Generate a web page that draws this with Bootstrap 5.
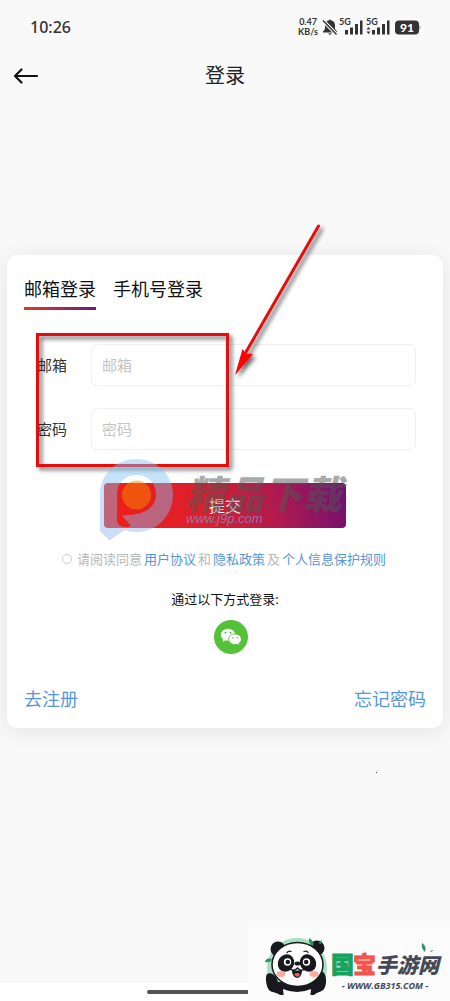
<!DOCTYPE html>
<html lang="zh-CN">
<head>
<meta charset="utf-8">
<meta name="viewport" content="width=device-width, initial-scale=1">
<title>登录</title>
<link rel="stylesheet" href="https://cdn.jsdelivr.net/npm/bootstrap@5.3.0/dist/css/bootstrap.min.css">
<script src="https://cdn.jsdelivr.net/npm/bootstrap@5.3.0/dist/js/bootstrap.bundle.min.js"></script>
<style>
  body { background: #f9f9f9; color: #111; font-family: "Noto Sans", "Noto Sans CJK SC", sans-serif; overflow-x: hidden; }
  a { color: #5596dc; text-decoration: none; }
  .status { height: 54px; padding: 0 27px 0 30px; color: #333; font-family: Lato, sans-serif; font-weight: 700; }
  .clock { font-family: "Noto Sans", sans-serif; font-size: 16px; font-weight: 500; }
  .rate { font-size: 9px; line-height: 10px; margin-right: 3px; }
  .topbar { height: 44px; }
  .topbar h1 { font-size: 20px; line-height: 28px; font-weight: 400; color: #222; }
  .back { left: 12px; width: 28px; height: 28px; }
  .panel { margin: 157px 7px 0; padding: 20px 17px 15px; border: 0; border-radius: 10px; box-shadow: 0 3px 24px rgba(0,0,0,.09); color: #111; }
  .tabs { gap: 17px; }
  .tabs button { background: none; border: 0; padding: 0 0 7px; font-size: 18px; line-height: 28px; color: #111; }
  .tabs .current { background: linear-gradient(90deg, #dd3a2a, #75186f) bottom / 100% 3px no-repeat; }
  .fields { margin-top: 34px; padding: 0 10px 0 13px; }
  .entry { margin-bottom: 22px; }
  .entry label { width: 54px; font-size: 15px; line-height: 24px; color: #333; }
  .entry .form-control { height: 42px; border-color: #f0f0f0; border-radius: 6px; font-size: 15px; padding: 0 10px; }
  .entry .form-control::placeholder { color: #c4c4c4; }
  .send { width: 242px; height: 45px; margin-top: 11px; padding: 0; border: 0; border-radius: 4px; font-size: 16px; color: #fff; background: linear-gradient(75deg, #f01f16, #dc1f2c 40%, #b01a50 70%, #6e0f72); }
  .agree { margin-top: 21px; font-size: 13px; line-height: 20px; color: #b8b8b8; }
  .agree a { margin: 0 2px; }
  .agree input { appearance: none; width: 10px; height: 10px; margin: 0 5px 0 0; border: 1px solid #cfcfcf; border-radius: 50%; background: #fff; }
  .agree input:checked { background: #5596dc; }
  .other { margin-top: 20px; font-size: 13px; line-height: 20px; }
  .providers { margin-top: 11px; padding-left: 12px; }
  .wechat { width: 34px; height: 34px; }
  .ends { margin-top: 31px; font-size: 18px; line-height: 28px; }
  .overlay { position: absolute; pointer-events: none; overflow: visible; left: 0; top: 0; }
  .speck { width: 1px; height: 1px; margin: 44px 73px 0 auto; background: #333; }
  .homebar { height: 18px; background: #fff; }
  .pill { width: 156px; height: 4px; border-radius: 2px; background: #555; }
  .brand { right: 0; bottom: 0; width: 202px; height: 74px; background: #fbfbfb; }
</style>
</head>
<body>
<div class="d-flex flex-column min-vh-100">
  <header>
    <div class="status d-flex align-items-center justify-content-between">
      <span class="clock">10:26</span>
      <div class="d-flex align-items-center">
        <div class="rate text-center">0.47<br>KB/s</div>
        <svg width="102" height="20" viewBox="0 0 102 20" fill="#333" aria-hidden="true">
          <path d="M8 3.200q1-1.600 2 0c3 .7 4 2.800 4 5.300v3.500l2 2.500v1H2v-1l2-2.500V8.500c0-2.500 1-4.600 4-5.300zM7 16.500h4q-2 2.500-4 0z"/>
          <path d="M2 3.500 15.500 17.500" stroke="#f9f9f9" stroke-width="3.500"/><path d="M2 3.500 15.500 17.500" stroke="#333" stroke-width="1.400"/>
          <text x="18" y="8" font-size="9" font-family="Lato">5G</text>
          <path d="M24 13h3v4.500h-3zM29 10.500h3v7h-3zM34 7h3v10.500h-3zM39 3.500h2.500v14H39z"/>
          <text x="45" y="8" font-size="9" font-family="Lato">5G</text>
          <path d="M45.500 12.500 47.500 10l2 2.500zM45.500 14.500h4L47.500 17zM51 13h3v4.500h-3zM56 10.500h3v7h-3zM61 7h3v10.500h-3zM66 3.500h2.500v14H66z"/>
          <rect x="74" y="3.500" width="24" height="14" rx="4"/><path d="M98.500 8q2 2.500 0 5z" fill="#888"/>
          <text x="86" y="14.500" font-size="12" font-weight="900" text-anchor="middle" fill="#fff" font-family="Lato">91</text>
        </svg>
      </div>
    </div>
    <div class="topbar position-relative d-flex align-items-center justify-content-center">
      <button class="back btn p-0 border-0 position-absolute d-flex" type="button" aria-label="返回">
        <svg width="28" height="28" viewBox="0 0 28 28" fill="none" stroke="#111" stroke-width="2.200" stroke-linecap="round" stroke-linejoin="round"><path d="M25 14H3M9.500 7.500 3 14l6.500 6.500"/></svg>
      </button>
      <h1 class="m-0">登录</h1>
    </div>
  </header>

  <main class="panel card position-relative">
    <div class="tabs d-flex">
      <button class="current" type="button">邮箱登录</button>
      <button type="button">手机号登录</button>
    </div>
    <form class="d-flex flex-column">
      <div class="fields">
        <div class="entry d-flex align-items-center">
          <label for="mail" class="flex-shrink-0">邮箱</label>
          <input id="mail" type="email" class="form-control" placeholder="邮箱">
        </div>
        <div class="entry d-flex align-items-center">
          <label for="pass" class="flex-shrink-0">密码</label>
          <input id="pass" type="password" class="form-control" placeholder="密码">
        </div>
      </div>
      <button type="submit" class="send btn align-self-center">提交</button>
      <div class="agree d-flex align-items-center justify-content-center">
        <input id="agree" type="checkbox"><label for="agree">请阅读同意</label><a href="#">用户协议</a>和<a href="#">隐私政策</a>及<a href="#">个人信息保护规则</a>
      </div>
    </form>
    <div class="other text-center">通过以下方式登录:</div>
    <div class="providers d-flex justify-content-center">
      <button type="button" class="wechat btn p-0 border-0 rounded-circle d-flex" aria-label="微信登录">
        <svg width="34" height="34" viewBox="0 0 34 34">
          <circle cx="17" cy="17" r="17" fill="#56c138"/>
          <path fill="#fff" d="M9 18l-.3 4 3-2z"/>
          <ellipse cx="14" cy="14.700" rx="7.200" ry="6" fill="#fff"/>
          <path fill="#fff" stroke="#56c138" stroke-width=".9" d="M21 13.900c-3.500 0-6.300 2.400-6.300 5.300s2.800 5.300 6.300 5.300c.8 0 1.500-.1 2.200-.3l2.300 1.300-.6-2.100c1.500-1 2.400-2.500 2.400-4.200 0-2.900-2.800-5.300-6.300-5.300z"/>
          <g fill="#56c138"><circle cx="11.500" cy="12.800" r="1"/><circle cx="16.500" cy="12.800" r="1"/><circle cx="19" cy="17.700" r=".8"/><circle cx="23.200" cy="17.700" r=".8"/></g>
        </svg>
      </button>
    </div>
    <div class="ends d-flex justify-content-between"><a href="#">去注册</a><a href="#">忘记密码</a></div>

    <svg class="overlay" width="436" height="473" viewBox="7 255 436 473" aria-hidden="true">
      <defs>
        <linearGradient id="drop" x1="0" y1="0" x2="0" y2="1"><stop offset="0" stop-color="#7cc4f2"/><stop offset="1" stop-color="#8db4f2"/></linearGradient>
        <filter id="shade" x="-20%" y="-20%" width="150%" height="150%"><feDropShadow dx="3" dy="3" stdDeviation="2" flood-color="#000" flood-opacity=".6"/></filter>
      </defs>
      <g fill="none" stroke="#e60f10" stroke-width="3" filter="url(#shade)">
        <rect x="37.500" y="334.500" width="190" height="131"/>
        <path d="M318.500 226 246 352" stroke-linecap="round"/>
        <path d="M235 375 242.500 349 246 353.500 253 354z" fill="#f00" stroke="none"/>
      </g>
      <path fill="url(#drop)" fill-opacity=".45" fill-rule="evenodd" d="M100 495C100 474 116 459 136.500 459S173 475 173 495s-16 37-36.500 37c-5 0-9-1-12-2l-15 10.500L100 531zM136.500 475C125 475 117 483 117 494v28c1 4 9 7 14 4l-9-10.500c22-.5 34-7 34-21.500 0-11-8-19-19.500-19z"/>
      <circle cx="136.500" cy="495" r="14.500" fill="#f58a00" fill-opacity=".5"/>
      <g fill="#555" fill-opacity=".5" font-style="italic">
        <text x="186" y="509" font-size="39" font-weight="900" font-family="Noto Sans CJK SC">精品下载</text>
        <text x="186" y="523" font-size="13" fill="#7f8fc4" fill-opacity=".8" font-family="Liberation Sans">www.j9p.com</text>
      </g>
    </svg>
  </main>
  <div class="speck"></div>

  <footer class="homebar mt-auto position-relative d-flex align-items-center justify-content-center">
    <div class="pill"></div>
    <div class="brand position-absolute">
      <svg width="202" height="74" viewBox="248 927 202 74" role="img" aria-label="国宝手游网">
        <circle cx="297" cy="968" r="30" fill="#a9dfc3"/>
        <path fill="#17191e" d="M267 974c-2 3-1 12 2 16 3 3 8 2 11 5h34c3-3 8-3 10-6 3-4 3-14-1-17-4-2-8 3-9 8l-36 2c-1-5-6-11-11-8z"/>
        <path fill="#fbfbfb" d="M283 989q14 6 28 0l-1 10h-26z"/>
        <g fill="#17191e"><circle cx="278" cy="949" r="7.500"/><circle cx="317" cy="948" r="7.500"/></g>
        <ellipse cx="297.500" cy="964.500" rx="25.500" ry="22" fill="#fff" stroke="#17191e" stroke-width="1.500"/>
        <g fill="#17191e"><ellipse cx="286" cy="963" rx="8" ry="9" transform="rotate(30 286 963)"/><ellipse cx="308" cy="963" rx="8" ry="9" transform="rotate(-30 308 963)"/><ellipse cx="297.500" cy="963.500" rx="3" ry="2"/></g>
        <g fill="#fff"><circle cx="287.500" cy="962" r="3.700"/><circle cx="306.500" cy="962" r="3.700"/></g>
        <g fill="#17191e"><circle cx="287.800" cy="962" r="2.300"/><circle cx="306.200" cy="962" r="2.300"/></g>
        <path d="M287 952.500q2-2 4-1M304 951.500q3-1 4 1M290 969q4 3 7.500-1 3 4 7.500 1" fill="none" stroke="#17191e" stroke-width="1.300" stroke-linecap="round"/>
        <path d="M292 970q5 1 10 0c0 11-10 10-10 0z" fill="#17191e"/><path d="M294 974q3-2 6 0-2 6-6 0z" fill="#f06455"/>
        <g fill="#ffa99d"><ellipse cx="281" cy="974" rx="4.500" ry="3"/><ellipse cx="314" cy="974" rx="4.500" ry="3"/></g>
        <path fill="#2e9363" d="M309 938q6 3 4 8-5-2-4-8zM265 962q6 1 7-3-6-2-7 3zM422 943q5 3 3 9-4-3-3-9zM318 943l4-3-1 4zM430 951l4-1-3 2z"/>
        <g font-family="Noto Sans CJK SC" font-weight="900">
          <text x="331" y="973" font-size="23" fill="#16a35f" stroke="#16a35f" stroke-width=".8">国</text>
          <text x="353" y="973" font-size="23" fill="#f0574c" stroke="#f0574c" stroke-width=".8">宝</text>
          <text x="376" y="973" font-size="21" font-style="italic" fill="#434957">手游网</text>
        </g>
        <text x="385" y="989" font-size="9" font-weight="700" font-style="italic" text-anchor="middle" fill="#434957" font-family="Open Sans">- WWW.GB315.COM -</text>
      </svg>
    </div>
  </footer>
</div>
</body>
</html>
